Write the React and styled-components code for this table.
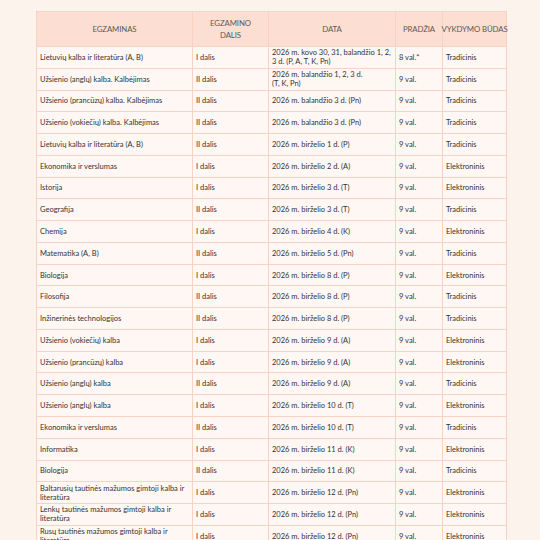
import React from 'react';
import styled, { createGlobalStyle } from 'styled-components';

const rows = [
  ['Lietuvių kalba ir literatūra (A, B)', 'I dalis', ['2026 m. kovo 30, 31, balandžio 1, 2,', '3 d. (P, A, T, K, Pn)'], '8 val.*', 'Tradicinis'],
  ['Užsienio (anglų) kalba. Kalbėjimas', 'II dalis', ['2026 m. balandžio 1, 2, 3 d.', '(T, K, Pn)'], '9 val.', 'Tradicinis'],
  ['Užsienio (prancūzų) kalba. Kalbėjimas', 'II dalis', '2026 m. balandžio 3 d. (Pn)', '9 val.', 'Tradicinis'],
  ['Užsienio (vokiečių) kalba. Kalbėjimas', 'II dalis', '2026 m. balandžio 3 d. (Pn)', '9 val.', 'Tradicinis'],
  ['Lietuvių kalba ir literatūra (A, B)', 'II dalis', '2026 m. birželio 1 d. (P)', '9 val.', 'Tradicinis'],
  ['Ekonomika ir verslumas', 'I dalis', '2026 m. birželio 2 d. (A)', '9 val.', 'Elektroninis'],
  ['Istorija', 'I dalis', '2026 m. birželio 3 d. (T)', '9 val.', 'Elektroninis'],
  ['Geografija', 'II dalis', '2026 m. birželio 3 d. (T)', '9 val.', 'Tradicinis'],
  ['Chemija', 'I dalis', '2026 m. birželio 4 d. (K)', '9 val.', 'Elektroninis'],
  ['Matematika (A, B)', 'II dalis', '2026 m. birželio 5 d. (Pn)', '9 val.', 'Tradicinis'],
  ['Biologija', 'I dalis', '2026 m. birželio 8 d. (P)', '9 val.', 'Elektroninis'],
  ['Filosofija', 'II dalis', '2026 m. birželio 8 d. (P)', '9 val.', 'Tradicinis'],
  ['Inžinerinės technologijos', 'II dalis', '2026 m. birželio 8 d. (P)', '9 val.', 'Tradicinis'],
  ['Užsienio (vokiečių) kalba', 'I dalis', '2026 m. birželio 9 d. (A)', '9 val.', 'Elektroninis'],
  ['Užsienio (prancūzų) kalba', 'I dalis', '2026 m. birželio 9 d. (A)', '9 val.', 'Elektroninis'],
  ['Užsienio (anglų) kalba', 'II dalis', '2026 m. birželio 9 d. (A)', '9 val.', 'Tradicinis'],
  ['Užsienio (anglų) kalba', 'I dalis', '2026 m. birželio 10 d. (T)', '9 val.', 'Elektroninis'],
  ['Ekonomika ir verslumas', 'II dalis', '2026 m. birželio 10 d. (T)', '9 val.', 'Tradicinis'],
  ['Informatika', 'I dalis', '2026 m. birželio 11 d. (K)', '9 val.', 'Elektroninis'],
  ['Biologija', 'II dalis', '2026 m. birželio 11 d. (K)', '9 val.', 'Tradicinis'],
  [['Baltarusių tautinės mažumos gimtoji kalba ir', 'literatūra'], 'I dalis', '2026 m. birželio 12 d. (Pn)', '9 val.', 'Elektroninis'],
  [['Lenkų tautinės mažumos gimtoji kalba ir', 'literatūra'], 'I dalis', '2026 m. birželio 12 d. (Pn)', '9 val.', 'Elektroninis'],
  [['Rusų tautinės mažumos gimtoji kalba ir', 'literatūra'], 'I dalis', '2026 m. birželio 12 d. (Pn)', '9 val.', 'Elektroninis'],
];

const headers = ['EGZAMINAS', ['EGZAMINO', 'DALIS'], 'DATA', 'PRADŽIA', 'VYKDYMO BŪDAS'];

const GlobalStyle = createGlobalStyle`
  html, body {
    margin: 0;
    padding: 0;
    background: #fdf3ed;
    overflow: hidden;
  }
`;

const Page = styled.div`
  width: 540px;
  height: 540px;
  padding: 11px 0 0 36px;
  box-sizing: border-box;
  background: #fdf3ed;
  font-family: Lato, "Open Sans", sans-serif;
  overflow: hidden;
`;

// grid with 1px gaps over a peach background draws the cell borders
const Grid = styled.div`
  display: grid;
  width: 471px;
  grid-template-columns: 155px 75px 126px 46px 63px;
  grid-template-rows: 34px;
  grid-auto-rows: 20.77px;
  gap: 1px;
  padding: 1px;
  box-sizing: border-box;
  background: #f6d3c3;
`;

const HeadCell = styled.div`
  display: flex;
  flex-direction: column;
  align-items: center;
  justify-content: center;
  background: #fcdfd2;
  color: #595959;
  font-size: 7.8px;
  line-height: 12px;
  white-space: nowrap;
  letter-spacing: -0.1px;
`;

const Cell = styled.div`
  display: flex;
  flex-direction: column;
  justify-content: center;
  padding: 0 3px;
  background: #fef7f3;
  color: #333333;
  font-size: 7.5px;
  line-height: 9px;
  white-space: nowrap;
  overflow: hidden;
`;

const Line = styled.span`
  display: block;
`;

const renderText = (v) =>
  Array.isArray(v) ? v.map((l, i) => <Line key={i}>{l}</Line>) : v;

const App = () => (
  <>
    <GlobalStyle />
    <Page>
      <Grid>
        {headers.map((h, i) => (
          <HeadCell key={i}>{renderText(h)}</HeadCell>
        ))}
        {rows.map((r, i) =>
          r.map((c, j) => <Cell key={`${i}-${j}`}>{renderText(c)}</Cell>)
        )}
      </Grid>
    </Page>
  </>
);

export default App;
